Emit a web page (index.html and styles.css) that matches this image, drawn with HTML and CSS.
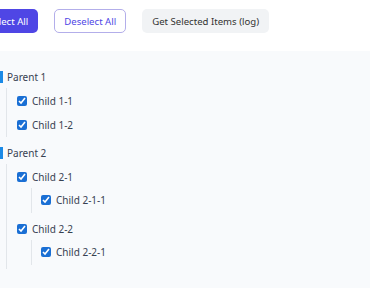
FILE: index.html
```html
<!DOCTYPE html>
<html lang="en">
    <head>
        <meta charset="UTF-8" />
        <meta name="viewport" content="width=device-width, initial-scale=1.0" />
        <title>Tree Select</title>
        <link rel="stylesheet" href="styles.css">
    </head>
    <body>
        <div class="app">
            <div class="toolbar">
                <button class="btn btn-primary" type="button">Select All</button>
                <button class="btn btn-outline" type="button">Deselect All</button>
                <button class="btn btn-light" type="button">Get Selected Items (log)</button>
            </div>

            <div class="panel">
                <div class="tree">
                    <div class="group">
                        <div class="parent-row"><span class="parent-label">Parent 1</span></div>
                        <div class="children">
                            <label class="row"><input type="checkbox" checked /> Child 1-1</label>
                            <label class="row"><input type="checkbox" checked /> Child 1-2</label>
                        </div>
                    </div>

                    <div class="group">
                        <div class="parent-row"><span class="parent-label">Parent 2</span></div>
                        <div class="children">
                            <div class="node">
                                <label class="row"><input type="checkbox" checked /> Child 2-1</label>
                                <div class="children nested">
                                    <label class="row"><input type="checkbox" checked /> Child 2-1-1</label>
                                </div>
                            </div>
                            <div class="node">
                                <label class="row"><input type="checkbox" checked /> Child 2-2</label>
                                <div class="children nested">
                                    <label class="row"><input type="checkbox" checked /> Child 2-2-1</label>
                                </div>
                            </div>
                        </div>
                    </div>
                </div>
            </div>
        </div>
    </body>
</html>
```

FILE: styles.css
```css
html,
body {
    overflow: hidden;
}
body {
    margin: 0;
    background: #ffffff;
    font-family: "Noto Sans", sans-serif;
    font-size: 10px;
    color: #374151;
}
.app {
    margin-left: -22px;
    width: 420px;
    padding-top: 9px;
}
.toolbar {
    display: flex;
    gap: 16px;
}
.btn {
    height: 24px;
    padding: 0 9px;
    border: 1px solid transparent;
    border-radius: 5px;
    font-family: "Noto Sans", sans-serif;
    font-size: 9.6px;
    cursor: pointer;
}
.btn-primary {
    background-color: #4f46e5;
    color: white;
}
.btn-outline {
    background-color: white;
    border-color: #b3aeea;
    color: #4f46e5;
}
.btn-light {
    background-color: #f1f3f5;
    color: #333333;
}

.panel {
    margin-top: 18px;
    background: #f8fafc;
    border-radius: 8px;
    padding: 14px 0 19px 22px;
}
.tree {
    display: flex;
    flex-direction: column;
    gap: 4px;
}
.parent-row {
    height: 23px;
    display: flex;
    align-items: center;
}
.parent-label {
    border-left: 3px solid #1b8ae6;
    padding-left: 4px;
    line-height: 12px;
    color: #374151;
}
.children {
    margin-left: 6px;
    border-left: 1px solid #e2e6ea;
    padding-left: 10px;
    padding-top: 1px;
    display: flex;
    flex-direction: column;
    gap: 1px;
}
.group > .children {
    padding-bottom: 1px;
}
.children.nested {
    margin-left: 14px;
    padding-left: 9px;
    padding-top: 0;
    padding-bottom: 2px;
    margin-bottom: 3px;
}
.row {
    height: 23px;
    display: flex;
    align-items: center;
    gap: 5px;
    cursor: pointer;
}
.row input {
    width: 10px;
    height: 10px;
    margin: 0;
    accent-color: #1a6fd4;
}
```
